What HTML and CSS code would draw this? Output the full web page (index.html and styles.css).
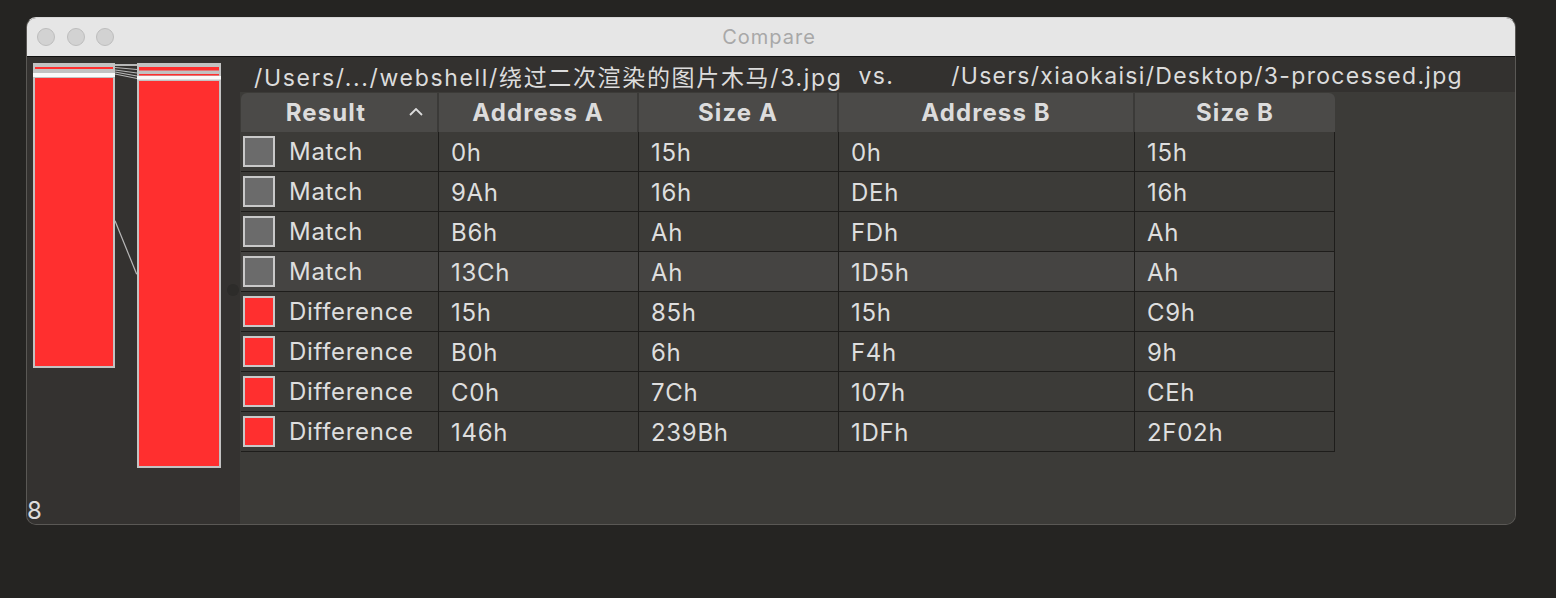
FILE: index.html
```html
<!DOCTYPE html>
<html>
<head>
<meta charset="utf-8">
<title>Compare</title>
<link rel="stylesheet" href="styles.css">
</head>
<body>
<div class="window">
  <div class="titlebar">
    <div class="lights"><span class="light"></span><span class="light"></span><span class="light"></span></div>
    <div class="title">Compare</div>
    <div></div>
  </div>
  <div class="content">
    <div class="side">
      <svg class="minimap" width="213" height="420" viewBox="0 0 213 420">
        <!-- bar A -->
        <rect x="6" y="6" width="82" height="305" fill="#c2c2c2"/>
        <rect x="8" y="10" width="78" height="2" fill="#ff2f2f"/>
        <rect x="6" y="16" width="82" height="4" fill="#fafafa"/>
        <rect x="8" y="21" width="78" height="288" fill="#ff2f2f"/>
        <!-- bar B -->
        <rect x="110" y="6" width="84" height="405" fill="#c2c2c2"/>
        <rect x="112" y="10" width="80" height="3.5" fill="#ff2f2f"/>
        <rect x="112" y="17" width="80" height="1.5" fill="#ff2f2f"/>
        <rect x="110" y="19" width="84" height="3.5" fill="#fafafa"/>
        <rect x="112" y="24" width="80" height="385" fill="#ff2f2f"/>
        <!-- connectors -->
        <rect x="88" y="7" width="22" height="2" fill="#b8b8b8"/>
        <g stroke="#b8b8b8" stroke-width="1.2" fill="none">
          <line x1="88" y1="10.5" x2="110" y2="12.5"/>
          <line x1="88" y1="13" x2="110" y2="16"/>
          <line x1="88" y1="15" x2="110" y2="19"/>
          <line x1="88" y1="17" x2="110" y2="21.5"/>
          <line x1="88" y1="163.7" x2="109.7" y2="217.3"/>
        </g>
        <circle cx="206" cy="233" r="6" fill="#2d2c2a"/>
      </svg>
      <div class="count">8</div>
    </div>
    <div class="main">
      <div class="paths"><span class="path-a">/Users/.../webshell/绕过二次渲染的图片木马/3.jpg</span><span class="vs">vs.</span><span class="path-b">/Users/xiaokaisi/Desktop/3-processed.jpg</span></div>
      <div class="tablearea">
        <div class="table">
          <div class="hrow">
            <div class="hcell hresult"><span class="hlabel">Result</span><svg class="caret" width="14" height="8" viewBox="0 0 14 8"><polyline points="1,7 7,1 13,7" fill="none" stroke="#dcdcdc" stroke-width="1.8"/></svg></div>
            <div class="hcell">Address A</div>
            <div class="hcell">Size A</div>
            <div class="hcell">Address B</div>
            <div class="hcell hlast">Size B</div>
          </div>
          <div class="row"><div class="cell rc"><span class="sw match"></span>Match</div><div class="cell">0h</div><div class="cell">15h</div><div class="cell">0h</div><div class="cell">15h</div></div>
          <div class="row"><div class="cell rc"><span class="sw match"></span>Match</div><div class="cell">9Ah</div><div class="cell">16h</div><div class="cell">DEh</div><div class="cell">16h</div></div>
          <div class="row"><div class="cell rc"><span class="sw match"></span>Match</div><div class="cell">B6h</div><div class="cell">Ah</div><div class="cell">FDh</div><div class="cell">Ah</div></div>
          <div class="row sel"><div class="cell rc"><span class="sw match"></span>Match</div><div class="cell">13Ch</div><div class="cell">Ah</div><div class="cell">1D5h</div><div class="cell">Ah</div></div>
          <div class="row"><div class="cell rc"><span class="sw diff"></span>Difference</div><div class="cell">15h</div><div class="cell">85h</div><div class="cell">15h</div><div class="cell">C9h</div></div>
          <div class="row"><div class="cell rc"><span class="sw diff"></span>Difference</div><div class="cell">B0h</div><div class="cell">6h</div><div class="cell">F4h</div><div class="cell">9h</div></div>
          <div class="row"><div class="cell rc"><span class="sw diff"></span>Difference</div><div class="cell">C0h</div><div class="cell">7Ch</div><div class="cell">107h</div><div class="cell">CEh</div></div>
          <div class="row"><div class="cell rc"><span class="sw diff"></span>Difference</div><div class="cell">146h</div><div class="cell">239Bh</div><div class="cell">1DFh</div><div class="cell">2F02h</div></div>
        </div>
      </div>
    </div>
  </div>
</div>
</body>
</html>
```

FILE: styles.css
```css
html, body {
  margin: 0;
  padding: 0;
}
body {
  background: #252422;
  width: 1556px;
  height: 598px;
  overflow: hidden;
  font-family: Inter, "Noto Sans CJK SC", sans-serif;
  padding-top: 17px;
  box-sizing: border-box;
}
.window {
  margin-left: 26px;
  width: 1490px;
  height: 508px;
  box-sizing: border-box;
  border: 1px solid #5a5855;
  border-top-color: #d8d8d8;
  border-radius: 10px;
  overflow: hidden;
  display: flex;
  flex-direction: column;
  background: #3c3b38;
}
.titlebar {
  height: 39px;
  flex: none;
  box-sizing: border-box;
  background: #e6e6e6;
  border-bottom: 1px solid #111;
  display: grid;
  grid-template-columns: 1fr auto 1fr;
  align-items: center;
}
.lights {
  display: flex;
  gap: 11.5px;
  padding-left: 10px;
}
.light {
  width: 18px;
  height: 18px;
  box-sizing: border-box;
  border-radius: 50%;
  background: #d2d2d2;
  border: 1px solid #bdbdbd;
}
.title {
  font-size: 20px;
  color: #a8a8a8;
  letter-spacing: 1px;
  padding-right: 4px;
}
.content {
  flex: 1;
  display: flex;
  min-height: 0;
}
.side {
  width: 213px;
  flex: none;
  background: #343230;
  display: flex;
  flex-direction: column;
  justify-content: space-between;
}
.minimap {
  display: block;
}
.count {
  font-size: 24px;
  line-height: 24px;
  color: #dcdcdc;
  padding-bottom: 1px;
}
.main {
  flex: 1;
  display: flex;
  flex-direction: column;
}
.paths {
  height: 35px;
  flex: none;
  background: #33312f;
  display: flex;
  align-items: center;
  padding-left: 14px;
  padding-top: 2px;
  box-sizing: border-box;
  font-size: 23px;
  letter-spacing: 1.3px;
  color: #dcdcdc;
  white-space: pre;
}
.path-a {
  letter-spacing: 1.66px;
}
.vs {
  margin-left: 16px;
}
.path-b {
  margin-left: 57px;
}
.tablearea {
  flex: 1;
  background: #3c3b38;
  padding-left: 1px;
  padding-top: 1px;
}
.table {
  width: 1094px;
}
.hrow, .row {
  display: grid;
  grid-template-columns: 198px 200px 200px 296px 200px;
}
.hrow {
  height: 39px;
  background: #4b4a48;
  border-radius: 6px 6px 0 0;
}
.hcell {
  display: flex;
  align-items: center;
  justify-content: center;
  font-weight: 700;
  font-size: 24px;
  letter-spacing: 1.1px;
  color: #dcdcdc;
  border-right: 2px solid #3b3a38;
}
.hcell.hlast {
  border-right: none;
}
.hresult {
  justify-content: flex-start;
}
.hlabel {
  width: 170px;
  text-align: center;
}
.caret {
  margin-left: -2px;
  margin-bottom: 2px;
}
.row {
  height: 40px;
  box-sizing: border-box;
  border-bottom: 1px solid #1e1d1b;
}
.row.sel {
  background: #454442;
}
.cell {
  display: flex;
  align-items: center;
  padding-left: 12px;
  padding-top: 1px;
  font-size: 24px;
  letter-spacing: 0.7px;
  color: #dedede;
  border-right: 1px solid #1e1d1b;
}
.cell.rc {
  padding-left: 2px;
  padding-top: 0;
  gap: 14px;
}
.sw {
  width: 32px;
  height: 31px;
  box-sizing: border-box;
  border: 2px solid #c9c9c9;
  flex: none;
}
.sw.match {
  background: #6b6b6b;
}
.sw.diff {
  background: #ff2f2f;
}
```
